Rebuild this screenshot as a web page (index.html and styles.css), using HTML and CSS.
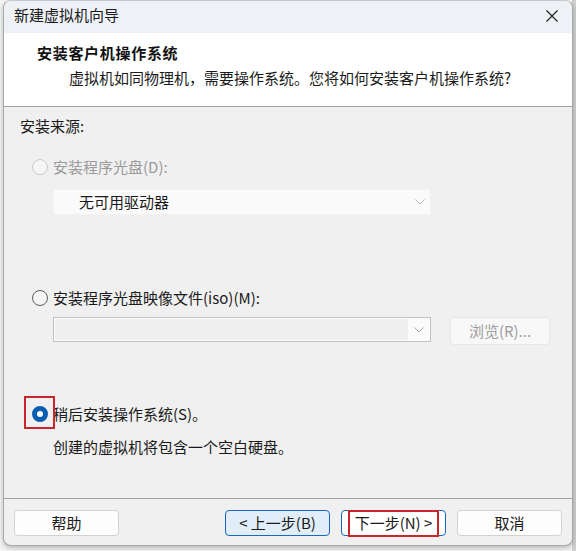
FILE: index.html
```html
<!DOCTYPE html>
<html lang="zh-CN">
<head>
<meta charset="utf-8">
<title>新建虚拟机向导</title>
<link rel="stylesheet" href="styles.css">
</head>
<body>
<div class="screen">
  <div class="window">
    <div class="titlebar">
      <span class="title">新建虚拟机向导</span>
      <span class="close">
        <svg width="12" height="12" viewBox="0 0 12 12"><path d="M0.5 0.5L11.5 11.5M11.5 0.5L0.5 11.5" stroke="#1b1b1b" stroke-width="1.1" fill="none"/></svg>
      </span>
    </div>
    <div class="header">
      <div class="h-title">安装客户机操作系统</div>
      <div class="h-sub">虚拟机如同物理机，需要操作系统。您将如何安装客户机操作系统?</div>
    </div>
    <div class="content">
      <div class="label">安装来源:</div>

      <div class="radio-row disabled r1">
        <span class="radio"></span>
        <span class="rtext">安装程序光盘(D):</span>
      </div>
      <div class="select">
        <span class="select-text">无可用驱动器</span>
        <svg class="chev" width="10" height="6" viewBox="0 0 10 6"><path d="M0.5 0.5L5 5L9.5 0.5" stroke="#b4b4b4" stroke-width="1" fill="none"/></svg>
      </div>

      <div class="radio-row r2">
        <span class="radio"></span>
        <span class="rtext">安装程序光盘映像文件(iso)(M):</span>
      </div>
      <div class="combo-row">
        <div class="combo">
          <div class="combo-input"></div>
          <svg class="chev" width="10" height="6" viewBox="0 0 10 6"><path d="M0.5 0.5L5 5L9.5 0.5" stroke="#a8a8a8" stroke-width="1" fill="none"/></svg>
        </div>
        <div class="browse">浏览(R)...</div>
      </div>

      <div class="radio-row r3">
        <span class="radio checked"></span>
        <span class="rtext">稍后安装操作系统(S)。</span>
        <span class="mark mark-radio"></span>
      </div>
      <div class="note">创建的虚拟机将包含一个空白硬盘。</div>
    </div>
    <div class="footer">
      <div class="btn">帮助</div>
      <div class="spacer"></div>
      <div class="btn btn-prev">&lt; 上一步(B)</div>
      <div class="btn btn-next">下一步(N) &gt;<span class="mark mark-next"></span></div>
      <div class="btn">取消</div>
    </div>
  </div>
</div>
</body>
</html>
```

FILE: styles.css
```css
* { box-sizing: border-box; }
html, body {
  margin: 0;
  padding: 0;
  width: 576px;
  height: 551px;
  overflow: hidden;
}
body {
  background: #f4f4f4;
  font-family: "Noto Sans CJK SC", "Noto Sans", sans-serif;
  font-size: 15px;
  color: #1a1a1a;
}
.screen {
  width: 576px;
  height: 551px;
  background: linear-gradient(to right, #f4f4f4 0, #f4f4f4 572px, #cfcfcf 572px, #cfcfcf 576px);
  padding-left: 3px;
}
.window {
  width: 570px;
  height: 546px;
  border: 1px solid #a8a8a8;
  border-top-color: #c8c8c8;
  border-radius: 8px;
  background: #f0f0f0;
  overflow: hidden;
  display: flex;
  flex-direction: column;
  box-shadow: 0 2px 5px rgba(0,0,0,0.25);
}
.titlebar {
  height: 32px;
  flex: none;
  background: #eef2f7;
  display: flex;
  align-items: center;
  justify-content: space-between;
  padding: 0 14px 4px 10px;
}
.title {
  line-height: 20px;
  color: #1a1a1a;
}
.close {
  display: flex;
  width: 12px;
  height: 12px;
  margin-top: 2px;
}
.header {
  flex: none;
  height: 74px;
  background: #ffffff;
  border-bottom: 1px solid #a0a0a0;
  padding: 10px 0 0 33px;
}
.h-title {
  font-weight: bold;
  line-height: 20px;
  letter-spacing: 0.7px;
  color: #111;
}
.h-sub {
  margin-top: 5px;
  margin-left: 32px;
  line-height: 20px;
  letter-spacing: 0;
}
.content {
  flex: 1;
  padding: 9px 0 0 16px;
  display: flex;
  flex-direction: column;
}
.label {
  line-height: 20px;
}
.radio-row {
  position: relative;
  display: flex;
  align-items: center;
  height: 20px;
  margin-left: 12px;
}
.r1 { margin-top: 21px; }
.r2 { margin-top: 73px; }
.r3 { margin-top: 59px; }
.radio {
  width: 16px;
  height: 16px;
  border-radius: 50%;
  border: 1px solid #5c5c5c;
  background: #f6f6f6;
  flex: none;
}
.disabled .radio {
  border-color: #cbcbcb;
  background: #f5f5f5;
}
.disabled .rtext {
  color: #9a9a9a;
}
.radio.checked {
  border: 5px solid #0a5db3;
  background: #ffffff;
}
.rtext {
  margin-left: 5px;
  line-height: 20px;
  white-space: nowrap;
}
.select {
  margin: 12px 0 0 33px;
  width: 378px;
  height: 26px;
  background: #fafafa;
  border: 1px solid #f2f2f2;
  display: flex;
  align-items: center;
  justify-content: space-between;
  padding: 0 4px 0 25px;
}
.select-text {
  line-height: 20px;
}
.chev {
  flex: none;
  margin-right: 1px;
}
.combo-row {
  margin: 9px 0 0 33px;
  display: flex;
  align-items: flex-start;
  gap: 19px;
}
.combo {
  width: 378px;
  height: 25px;
  border: 1px solid #c2c2c2;
  background: #fbfbfb;
  display: flex;
  align-items: center;
  justify-content: space-between;
  padding: 1px 5px 1px 1px;
}
.combo-input {
  width: 353px;
  height: 21px;
  background: #efefef;
}
.browse {
  width: 100px;
  height: 28px;
  border: 1px solid #e6e6e6;
  border-radius: 4px;
  background: #f8f8f8;
  color: #9d9d9d;
  display: flex;
  align-items: center;
  justify-content: center;
  line-height: 20px;
}
.note {
  margin: 13px 0 0 33px;
  line-height: 20px;
}
.mark {
  position: absolute;
  border: 2px solid #c9252d;
  pointer-events: none;
}
.mark-radio {
  left: -8px;
  top: -8px;
  width: 31px;
  height: 33px;
}
.footer {
  flex: none;
  height: 47px;
  border-top: 1px solid #a3a3a3;
  padding: 11px 10px 0 10px;
  display: flex;
  align-items: flex-start;
  gap: 11px;
}
.spacer { flex: 1; }
.btn {
  position: relative;
  width: 105px;
  height: 26px;
  border: 1px solid #d2d2d2;
  border-radius: 4px;
  background: #fdfdfd;
  display: flex;
  align-items: center;
  justify-content: center;
  line-height: 20px;
  white-space: nowrap;
}
.btn-prev {
  background: #e1eef9;
  border-color: #1669bf;
}
.btn-next {
  border-color: #1669bf;
  background: #ffffff;
}
.mark-next {
  left: 6px;
  top: -1px;
  width: 91px;
  height: 27px;
}
```
